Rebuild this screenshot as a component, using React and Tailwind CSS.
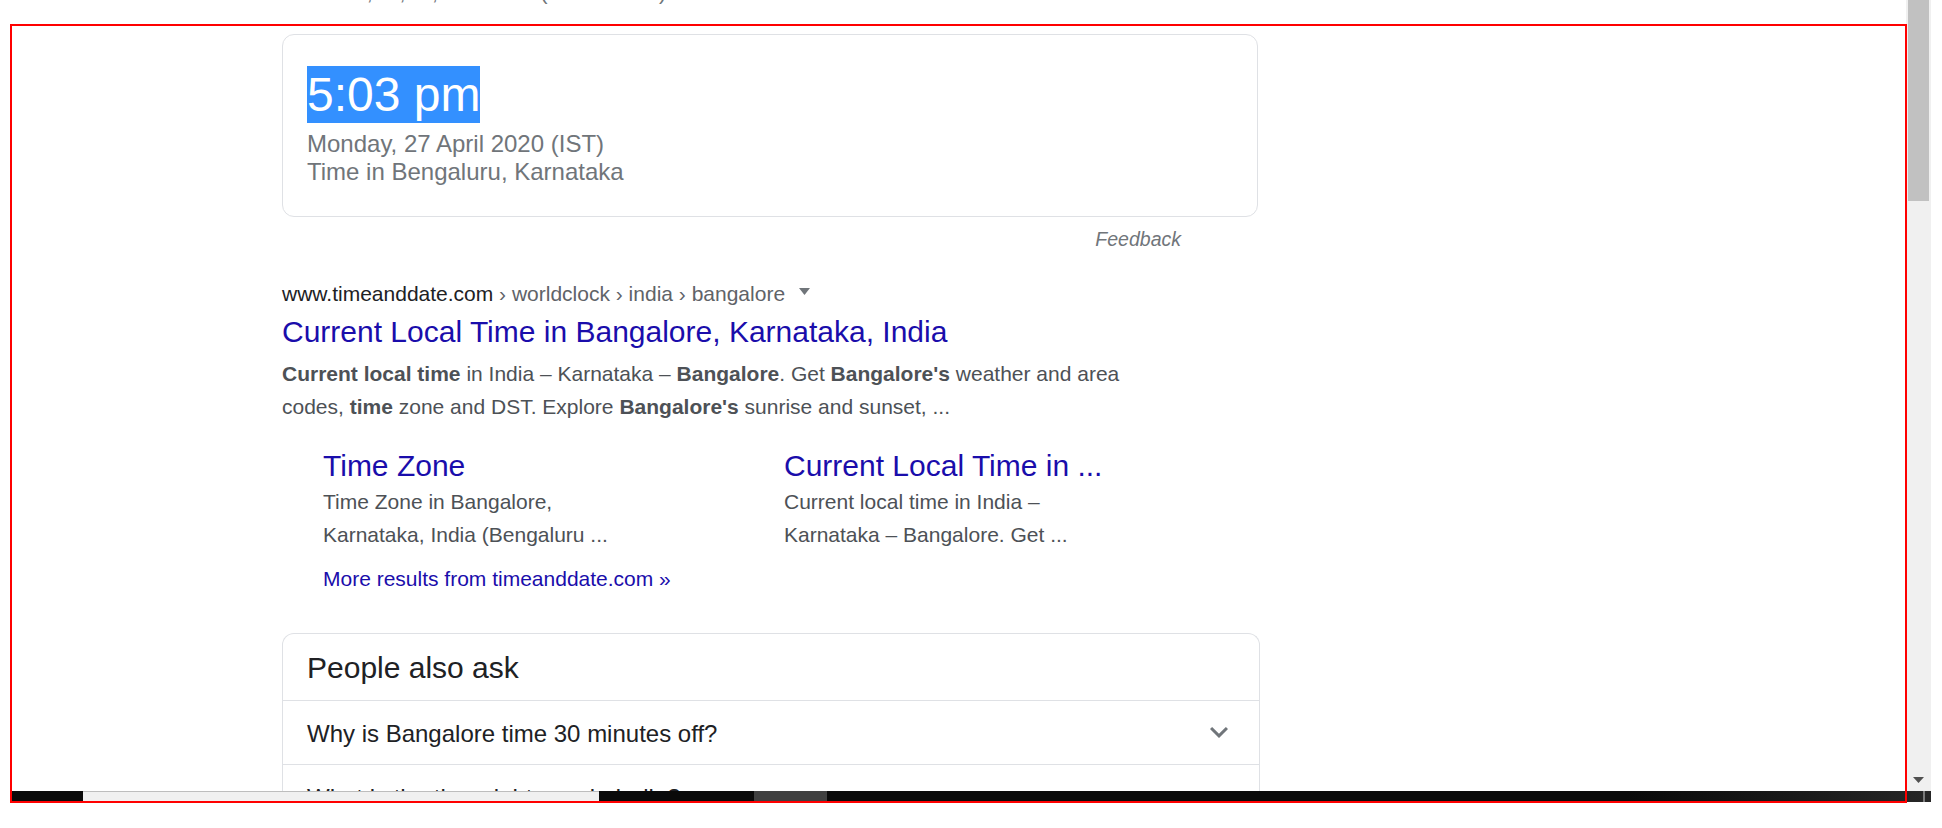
import React from 'react';

const snippetBold = 'font-bold';

function Sitelink({ title, lines }) {
  return (
    <div className="w-[461px]">
      <h3 className="text-[30px] leading-[39px] text-[#1a0dab] font-normal whitespace-nowrap">{title}</h3>
      <div className="w-[300px] text-[21px] leading-[33px] text-[#4d5156]">{lines}</div>
    </div>
  );
}

function Chevron() {
  return (
    <svg width="36" height="36" viewBox="0 0 24 24" className="shrink-0">
      <path d="M16.59 8.59L12 13.17 7.41 8.59 6 10l6 6 6-6z" fill="#70757a" />
    </svg>
  );
}

function Question({ text, last }) {
  return (
    <div className={`flex h-[64px] items-start justify-between pl-[24px] pr-[22px] ${last ? '' : 'border-b border-[#dfe1e5]'}`}>
      <div className="pt-[17px] text-[24px] leading-[31px] text-[#202124]">{text}</div>
      <div className="pt-[13px]">
        <Chevron />
      </div>
    </div>
  );
}

export default function App() {
  return (
    <div className="relative w-[1942px] h-[828px] overflow-hidden bg-white font-['Liberation_Sans',Arial,sans-serif]">
      <div className="flex h-[791px]">
        {/* page content */}
        <div className="w-[1906px] overflow-hidden pl-[282px]">
          <div className="ml-[-11px] mt-[-21px] h-[27px] text-[21px] leading-[27px] text-[#70757a] whitespace-nowrap">
            Karnataka, IN, IN, India time (GMT+05:30)
          </div>

          {/* time card */}
          <div className="mt-[28px] w-[976px] rounded-[12px] border border-[#dfe1e5] pl-[24px] pt-[31px] pb-[30px]">
            <div className="h-[57px]">
              <span className="inline-block h-[57px] bg-[#3390ff] text-[48px] leading-[57px] text-white">5:03 pm</span>
            </div>
            <div className="mt-[7px] text-[24px] leading-[28px] text-[#70757a]">
              <div>Monday, 27 April 2020 (IST)</div>
              <div>Time in Bengaluru, Karnataka</div>
            </div>
          </div>

          <div className="mt-[10px] flex w-[976px] justify-end pr-[77px]">
            <span className="text-[19.5px] leading-[24px] italic text-[#70757a]">Feedback</span>
          </div>

          {/* result */}
          <div className="mt-[29px] flex items-center h-[27px] text-[21px] leading-[27px] whitespace-nowrap">
            <span className="text-[#202124]">www.timeanddate.com</span>
            <span className="text-[#5f6368]">&nbsp;› worldclock › india › bangalore</span>
            <svg width="11" height="7" viewBox="0 0 11 7" className="ml-[14px] mb-[4px]">
              <path d="M0 0h11L5.5 7z" fill="#70757a" />
            </svg>
          </div>
          <h3 className="mt-[5px] text-[30px] leading-[39px] font-normal text-[#1a0dab]">
            Current Local Time in Bangalore, Karnataka, India
          </h3>
          <div className="mt-[6px] w-[900px] text-[21px] leading-[33px] text-[#4d5156]">
            <span className={snippetBold}>Current local time</span> in India – Karnataka –{' '}
            <span className={snippetBold}>Bangalore</span>. Get <span className={snippetBold}>Bangalore's</span> weather and area
            codes, <span className={snippetBold}>time</span> zone and DST. Explore{' '}
            <span className={snippetBold}>Bangalore's</span> sunrise and sunset, ...
          </div>

          <div className="mt-[23px] flex pl-[41px]">
            <Sitelink title="Time Zone" lines="Time Zone in Bangalore, Karnataka, India (Bengaluru ..." />
            <Sitelink title="Current Local Time in ..." lines="Current local time in India – Karnataka – Bangalore. Get ..." />
          </div>
          <div className="mt-[11px] pl-[41px] text-[21px] leading-[33px] text-[#1a0dab]">
            More results from timeanddate.com »
          </div>

          {/* people also ask */}
          <div className="mt-[38px] w-[978px] rounded-t-[12px] border border-b-0 border-[#dfe1e5]">
            <div className="border-b border-[#dfe1e5] pl-[24px] pt-[14px] pb-[13px] text-[30px] leading-[39px] text-[#202124]">
              People also ask
            </div>
            <Question text="Why is Bangalore time 30 minutes off?" />
            <Question text="What is the time right now in India?" last />
          </div>
        </div>

        {/* vertical scrollbar */}
        <div className="flex w-[25px] flex-col items-center bg-[#f0f0f0]">
          <div className="h-[201px] w-[21px] bg-[#c1c1c1]" />
          <div className="flex-1" />
          <svg width="11" height="6" viewBox="0 0 11 6" className="mb-[8px]">
            <path d="M0 0h11L5.5 6z" fill="#505050" />
          </svg>
        </div>
        <div className="w-[11px]" />
      </div>

      {/* taskbar strip */}
      <div className="flex h-[11px] pl-[10px] pr-[11px]">
        <div className="w-[73px] bg-[#0a0a0a]" />
        <div className="w-[516px] border-t border-[#bdbdbd] bg-[#f0f0f0]" />
        <div className="w-[155px] bg-[#0a0a0a]" />
        <div className="w-[73px] bg-[#404040]" />
        <div className="w-[800px] bg-[#0a0a0a]" />
        <div className="flex-1 bg-gradient-to-r from-[#0a0a0a] to-[#262626]" />
        <div className="w-[2px] bg-[#7a7a7a]" />
        <div className="w-[6px] bg-[#262626]" />
      </div>

      {/* red annotation frame */}
      <div className="pointer-events-none absolute left-[10px] top-[24px] h-[779px] w-[1897px] border-2 border-[#ff0000]" />
    </div>
  );
}
